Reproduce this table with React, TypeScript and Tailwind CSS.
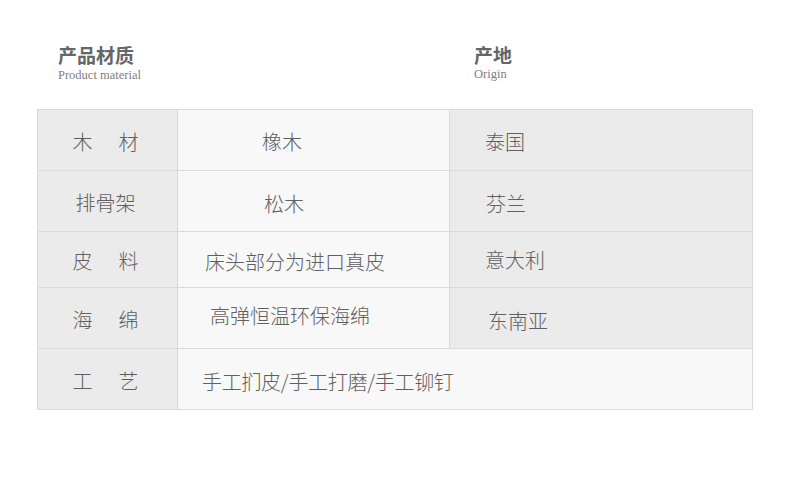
import React from 'react';

const cjk = '"Noto Sans CJK SC", "Noto Sans", sans-serif';

interface Row {
    label: string[];
    value: string;
    valuePad: string;
    origin?: string;
    originPad?: string;
    height: string;
}

const rows: Row[] = [
    { label: ['木', '材'], value: '橡木', valuePad: 'pl-[84px] pt-[4px]', origin: '泰国', originPad: 'pl-[35px] pt-[4px]', height: 'h-[61px]' },
    { label: ['排骨架'], value: '松木', valuePad: 'pl-[86px] pt-[6px]', origin: '芬兰', originPad: 'pl-[36px] pt-[6px]', height: 'h-[61px]' },
    { label: ['皮', '料'], value: '床头部分为进口真皮', valuePad: 'pl-[27px] pt-[4px]', origin: '意大利', originPad: 'pl-[35px]', height: 'h-[56px]' },
    { label: ['海', '绵'], value: '高弹恒温环保海绵', valuePad: 'pl-[32px] pb-[4px]', origin: '东南亚', originPad: 'pl-[38px] pt-[6px]', height: 'h-[61px]' },
    { label: ['工', '艺'], value: '手工扪皮/手工打磨/手工铆钉', valuePad: 'pl-[24px] pt-[6px] tracking-[-0.3px]', height: 'h-[60px]' },
];

export default function App() {
    return (
        <div className="w-[790px] h-[477px] bg-white" style={{ fontFamily: cjk }}>
            {/* Headings */}
            <div className="flex pt-[42px] pl-[58px]">
                <div className="w-[416px]">
                    <div className="text-[19px] leading-[26px] font-bold text-[#666]">产品材质</div>
                    <div className="text-[12.5px] leading-[14px] text-[#808080]" style={{ fontFamily: '"Liberation Serif", serif' }}>
                        Product material
                    </div>
                </div>
                <div>
                    <div className="text-[19px] leading-[26px] font-bold text-[#666]">产地</div>
                    <div className="-mt-[1px] text-[12.5px] leading-[14px] text-[#808080]" style={{ fontFamily: '"Liberation Serif", serif' }}>
                        Origin
                    </div>
                </div>
            </div>

            {/* Table */}
            <div className="ml-[37px] mt-[27px] w-[716px] border border-[#dadada] text-[20px] font-light text-[#606060]">
                {rows.map((row, i) => (
                    <div
                        key={i}
                        className={`flex ${row.height} ${i < rows.length - 1 ? 'border-b border-[#dadada]' : ''}`}
                    >
                        <div className="w-[140px] shrink-0 flex items-center justify-center gap-[26px] bg-[#ebebeb] border-r border-[#dadada] pt-[3px] pr-[4px]">
                            {row.label.map((t) => (
                                <span key={t}>{t}</span>
                            ))}
                        </div>
                        {row.origin ? (
                            <>
                                <div className={`w-[272px] shrink-0 flex items-center bg-[#f8f8f8] border-r border-[#dadada] ${row.valuePad}`}>
                                    {row.value}
                                </div>
                                <div className={`flex-1 flex items-center bg-[#ebebeb] ${row.originPad}`}>{row.origin}</div>
                            </>
                        ) : (
                            <div className={`flex-1 flex items-center bg-[#f8f8f8] ${row.valuePad}`}>{row.value}</div>
                        )}
                    </div>
                ))}
            </div>
        </div>
    );
}
